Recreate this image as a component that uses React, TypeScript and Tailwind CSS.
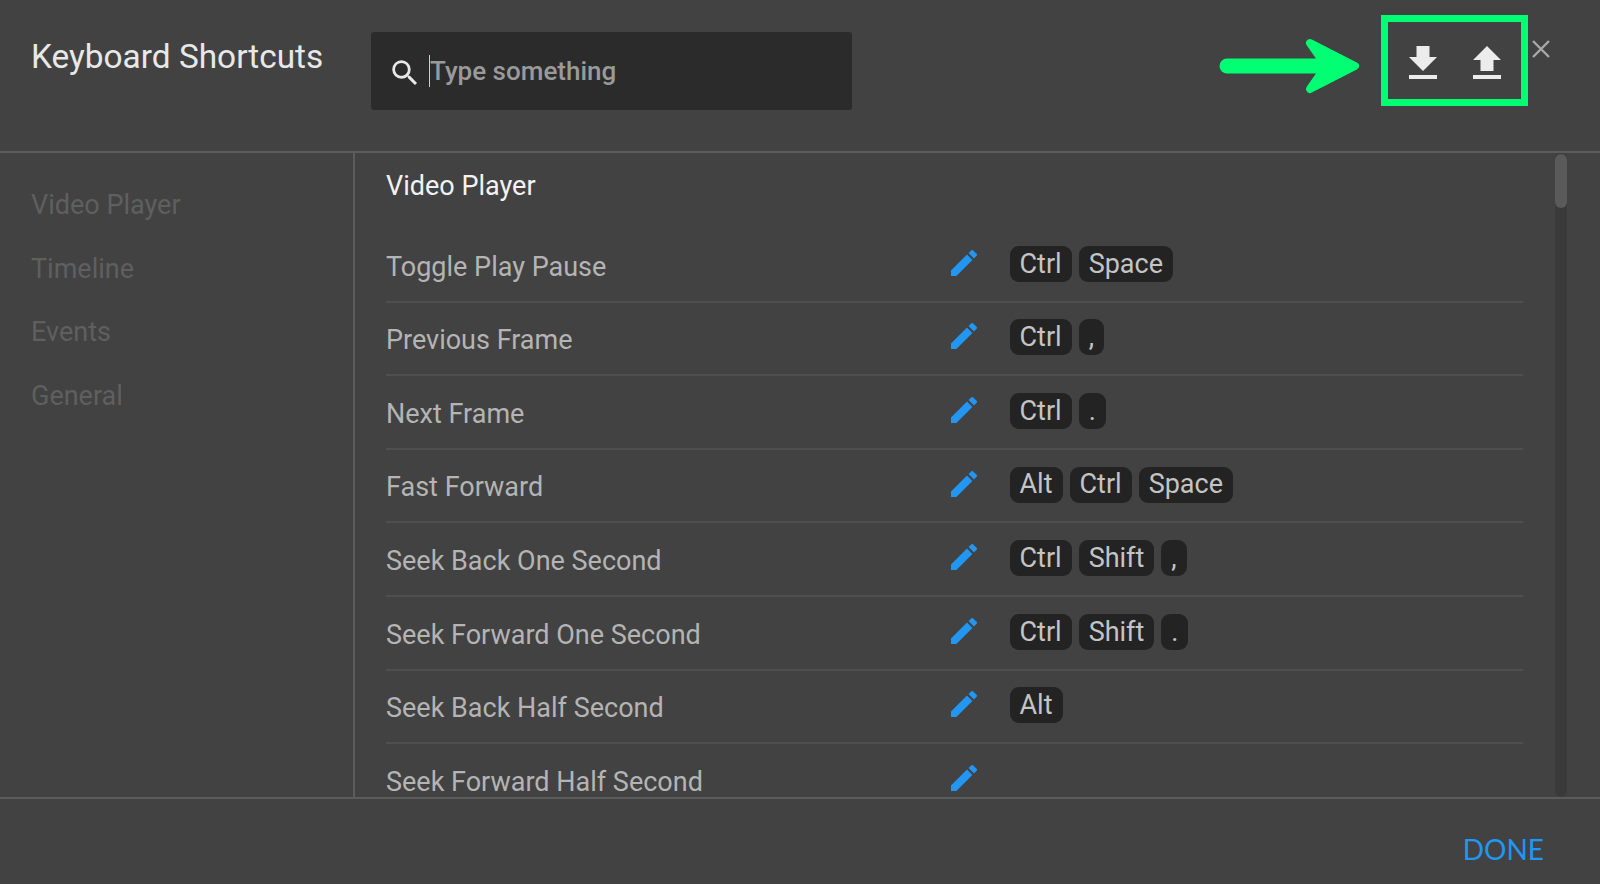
import React from "react";

const rows: [string, string[]][] = [
  ["Toggle Play Pause", ["Ctrl", "Space"]],
  ["Previous Frame", ["Ctrl", ","]],
  ["Next Frame", ["Ctrl", "."]],
  ["Fast Forward", ["Alt", "Ctrl", "Space"]],
  ["Seek Back One Second", ["Ctrl", "Shift", ","]],
  ["Seek Forward One Second", ["Ctrl", "Shift", "."]],
  ["Seek Back Half Second", ["Alt"]],
  ["Seek Forward Half Second", []],
];

function Pencil() {
  return (
    <svg width="26" height="26" viewBox="3 3 18 18" className="mb-[4px] block">
      <path fill="#2196f3" d="M3 17.25V21h3.75L17.81 9.94l-3.75-3.75L3 17.25zM20.71 7.04a1 1 0 0 0 0-1.41l-2.34-2.34a1 1 0 0 0-1.41 0l-1.83 1.83 3.75 3.75 1.83-1.83z" />
    </svg>
  );
}

export default function App() {
  return (
    <div className="relative h-[884px] w-[1600px] overflow-hidden bg-[#424242] font-['Roboto',sans-serif]">
      <header className="flex h-[153px] border-b-2 border-[#5c5c5c]">
        <div className="w-[371px] pl-[31px] pt-[35px] text-[33.4px] leading-[44px] text-[#e8e8e8]">Keyboard Shortcuts</div>
        <div className="mt-8 flex h-[78px] w-[481px] items-center rounded-[3px] bg-[#2b2b2b] pl-[17px]">
          <svg width="34" height="34" viewBox="0 0 24 24" className="mt-1 shrink-0">
            <path fill="#e8e8e8" d="M15.5 14h-.79l-.28-.27A6.47 6.47 0 0 0 16 9.5 6.5 6.5 0 1 0 9.5 16c1.61 0 3.09-.59 4.23-1.57l.27.28v.79l5 4.99L20.49 19l-4.99-5zm-6 0C7.01 14 5 11.99 5 9.5S7.01 5 9.5 5 14 7.01 14 9.5 11.99 14 9.5 14z" />
          </svg>
          <div className="ml-[7px] h-[32px] w-px bg-[#cccccc]" />
          <div className="text-[26px] font-medium text-[#9a9a9a]">Type something</div>
        </div>
      </header>

      <div className="flex h-[644px]">
        <nav className="w-[354.5px] shrink-0 border-r-2 border-[#5c5c5c] pl-[31px] pt-[32px] text-[27px] leading-[40px] text-[#5f5f5f]">
          <div className="mb-[23.5px]">Video Player</div>
          <div className="mb-[23.5px]">Timeline</div>
          <div className="mb-[23.5px]">Events</div>
          <div>General</div>
        </nav>
        <main className="relative min-w-0 flex-1 overflow-hidden pl-[31.5px] pr-[77.5px]">
          <div className="h-[76px] pt-[15px] text-[27px] leading-[36px] text-[#f2f2f2]">Video Player</div>
          {rows.map(([name, keys]) => (
            <div key={name} className="flex h-[73.6px] items-center border-b-2 border-[#4f4f4f] text-[27px] text-[#b4b4b4]">
              <div className="w-[565px] shrink-0 pt-[4px]">{name}</div>
              <Pencil />
              <div className="mb-[2px] ml-[32.5px] flex gap-[7px]">
                {keys.map((k, i) => (
                  <span key={i} className="flex h-[36px] items-center rounded-[9px] bg-[#232323] px-[10px] text-[#c4c4c4]">{k}</span>
                ))}
              </div>
            </div>
          ))}
          <div className="absolute right-[33px] top-0 bottom-0 w-3 rounded-full bg-[#3a3a3a]">
            <div className="mt-px h-[54px] rounded-full bg-[#5a5a5a]" />
          </div>
        </main>
      </div>

      <footer className="flex h-[87px] items-start justify-end border-t-2 border-[#5c5c5c] pr-[56px] pt-[32px] font-['Lato',sans-serif] text-[28px] leading-[36px] text-[#2196f3]">
        DONE
      </footer>

      <div className="absolute left-[1381px] top-[14.5px] h-[91px] w-[147px] border-[7px] border-[#00ff73]" />
      <svg className="absolute left-[1218px] top-[36px]" width="144" height="60" viewBox="0 0 144 60">
        <path d="M9 30 H118" fill="none" stroke="#00ff73" strokeWidth="15" strokeLinecap="round" />
        <path d="M92 7 L137 30 L92 53 L108 30 Z" fill="#00ff73" stroke="#00ff73" strokeWidth="8" strokeLinejoin="round" />
      </svg>
      <svg className="absolute left-[1409px] top-[46px]" width="28" height="34" viewBox="0 0 28 34">
        <path fill="#ececec" d="M7.5 0h13v11h7.5L14 25 0 11h7.5zM0 29h28v4H0z" />
      </svg>
      <svg className="absolute left-[1473px] top-[46px]" width="28" height="34" viewBox="0 0 28 34">
        <path fill="#ececec" d="M14 0l14 14h-7.5v11h-13V14H0zM0 29h28v4H0z" />
      </svg>
      <svg className="absolute left-[1531px] top-[39px]" width="20" height="20" viewBox="0 0 20 20">
        <path d="M2 2L18 18M18 2L2 18" stroke="#a8a8a8" strokeWidth="2.4" fill="none" />
      </svg>
    </div>
  );
}
